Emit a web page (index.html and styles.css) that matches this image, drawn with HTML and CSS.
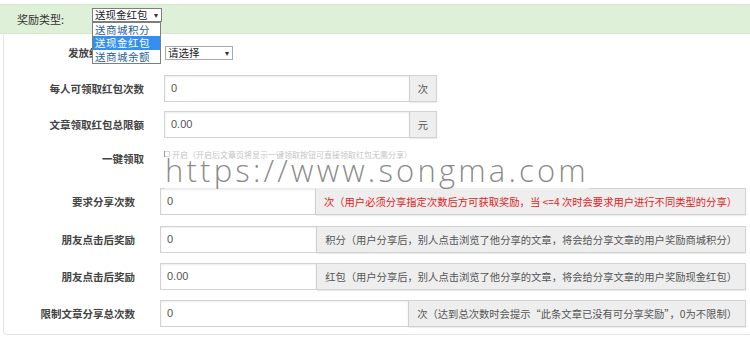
FILE: index.html
```html
<!DOCTYPE html>
<html lang="zh">
<head>
<meta charset="utf-8">
<link rel="stylesheet" href="styles.css">
</head>
<body>
<div class="page">
  <div class="topbar">
    <span class="top-label">奖励类型:</span>
    <div class="fake-select sel-type">
      <span>送现金红包</span><span class="arrow">▾</span>
      <ul class="dropdown">
        <li>送商城积分</li>
        <li class="active">送现金红包</li>
        <li>送商城余额</li>
      </ul>
    </div>
  </div>
  <div class="panel">
    <div class="row row-a">
      <div class="label la">发放红包方式设置</div>
      <div class="fake-select sel-issue"><span>请选择</span><span class="arrow">▾</span></div>
    </div>
    <div class="row g1 row-b">
      <div class="label l1">每人可领取红包次数</div>
      <div class="group w1"><div class="input">0</div><div class="addon">次</div></div>
    </div>
    <div class="row g1 row-c">
      <div class="label l1">文章领取红包总限额</div>
      <div class="group w1"><div class="input">0.00</div><div class="addon">元</div></div>
    </div>
    <div class="row g1 row-d">
      <div class="label l1">一键领取</div>
      <div class="check-line"><span class="box"></span><span class="tiny">开启（开启后文章页将显示一键领取按钮可直接领取红包无需分享）</span></div>
    </div>
    <div class="row g2 row-e">
      <div class="label l2">要求分享次数</div>
      <div class="group w2"><div class="input">0</div><div class="addon red">次（用户必须分享指定次数后方可获取奖励，当 &lt;=4 次时会要求用户进行不同类型的分享）</div></div>
    </div>
    <div class="row g2 row-f">
      <div class="label l2">朋友点击后奖励</div>
      <div class="group w2"><div class="input">0</div><div class="addon">积分（用户分享后，别人点击浏览了他分享的文章，将会给分享文章的用户奖励商城积分）</div></div>
    </div>
    <div class="row g2 row-g">
      <div class="label l2">朋友点击后奖励</div>
      <div class="group w2"><div class="input">0.00</div><div class="addon">红包（用户分享后，别人点击浏览了他分享的文章，将会给分享文章的用户奖励现金红包）</div></div>
    </div>
    <div class="row g2 row-h">
      <div class="label l2">限制文章分享总次数</div>
      <div class="group w2"><div class="input">0</div><div class="addon">次（达到总次数时会提示“此条文章已没有可分享奖励”，0为不限制）</div></div>
    </div>
    <div class="watermark">https://www.songma.com</div>
  </div>
</div>
</body>
</html>
```
FILE: styles.css
```css
* { box-sizing: border-box; }
body {
  margin: 0;
  background: #fff;
  font-family: "Noto Sans CJK SC", "Noto Sans", sans-serif;
  color: #333;
}
.page { width: 750px; height: 341px; position: relative; overflow: hidden; padding-top: 4px; }
.topbar {
  height: 30px;
  background: #dff0d8;
  border-top: 1px solid #d4e6cb;
  border-bottom: 1px solid #d4e6cb;
  display: flex;
  align-items: center;
  padding-left: 17px;
  position: relative;
  z-index: 5;
}
.top-label { font-size: 11px; color: #333; width: 75px; }
.fake-select {
  position: relative;
  height: 14px;
  border: 1px solid #7e7e7e;
  background: #fff;
  font-size: 10.5px;
  line-height: 12px;
  padding-left: 2px;
  display: flex;
  justify-content: space-between;
  color: #222;
}
.fake-select .arrow { font-size: 8px; padding-right: 3px; color: #333; }
.sel-type { width: 70px; margin-top: -9px; }
.dropdown {
  position: absolute;
  left: -1px;
  top: 13px;
  width: 69px;
  margin: 0;
  padding: 0;
  list-style: none;
  background: #fff;
  border: 1px solid #7e7e7e;
}
.dropdown li {
  height: 13.5px;
  line-height: 13.5px;
  padding-left: 2px;
  color: #1f5f8f;
  font-size: 10.5px;
  letter-spacing: 0.5px;
}
.dropdown li.active { background: #3390ef; color: #fff; }
.panel {
  margin-left: 3px;
  height: 301px;
  border-left: 1px solid #e6e6e6;
  border-bottom: 1px solid #e6e6e6;
  border-radius: 0 0 0 4px;
  position: relative;
  padding-top: 11px;
}
.row { display: flex; align-items: center; }
.label {
  font-size: 10.5px;
  font-weight: bold;
  color: #444;
  text-align: right;
  white-space: nowrap;
}
.la { width: 151px; margin-right: 10px; overflow: hidden; text-align: left; padding-left: 64px; }
.l1 { width: 140px; margin-right: 20px; }
.l2 { width: 131px; margin-right: 25px; }
.row-a { height: 15px; }
.sel-issue { width: 68px; height: 14px; border-color: #a9a9a9; }
.row-b { margin-top: 15px; }
.row-c { margin-top: 9px; }
.row-d { margin-top: 9px; height: 22px; }
.row-e { margin-top: 19px; }
.row-f { margin-top: 11px; }
.row-g { margin-top: 10px; }
.row-h { margin-top: 10px; }
.group { display: flex; height: 27px; }
.w1 { width: 273px; }
.w2 { width: 586px; }
.input {
  flex: 1;
  border: 1px solid #d2d2d2;
  box-shadow: inset 0 1px 2px rgba(0,0,0,0.08);
  font-family: "Liberation Sans", sans-serif;
  font-size: 11px;
  color: #555;
  line-height: 25px;
  padding-left: 6px;
  background: #fff;
}
.addon {
  border: 1px solid #d2d2d2;
  border-left: none;
  background: #eee;
  font-size: 10.3px;
  color: #555;
  line-height: 25px;
  padding: 0 8px;
  white-space: nowrap;
  box-shadow: 0 1px 1px rgba(0,0,0,0.08);
}
.w1 .addon { width: 27px; padding: 0; text-align: center; }
.addon.red { color: #e02222; }
.check-line { display: flex; align-items: center; margin-top: -8px; }
.box { width: 6px; height: 6px; border: 1px solid #999; margin-right: 2px; }
.tiny { font-size: 8px; color: #666; white-space: nowrap; }
.watermark {
  position: absolute;
  left: 161px;
  top: 117px;
  font-family: "Open Sans", sans-serif;
  font-weight: 300;
  font-size: 31px;
  letter-spacing: 3.2px;
  color: rgba(100, 100, 100, 0.75);
  background: rgba(255,255,255,0.6);
  line-height: 38px;
  white-space: nowrap;
}
```
